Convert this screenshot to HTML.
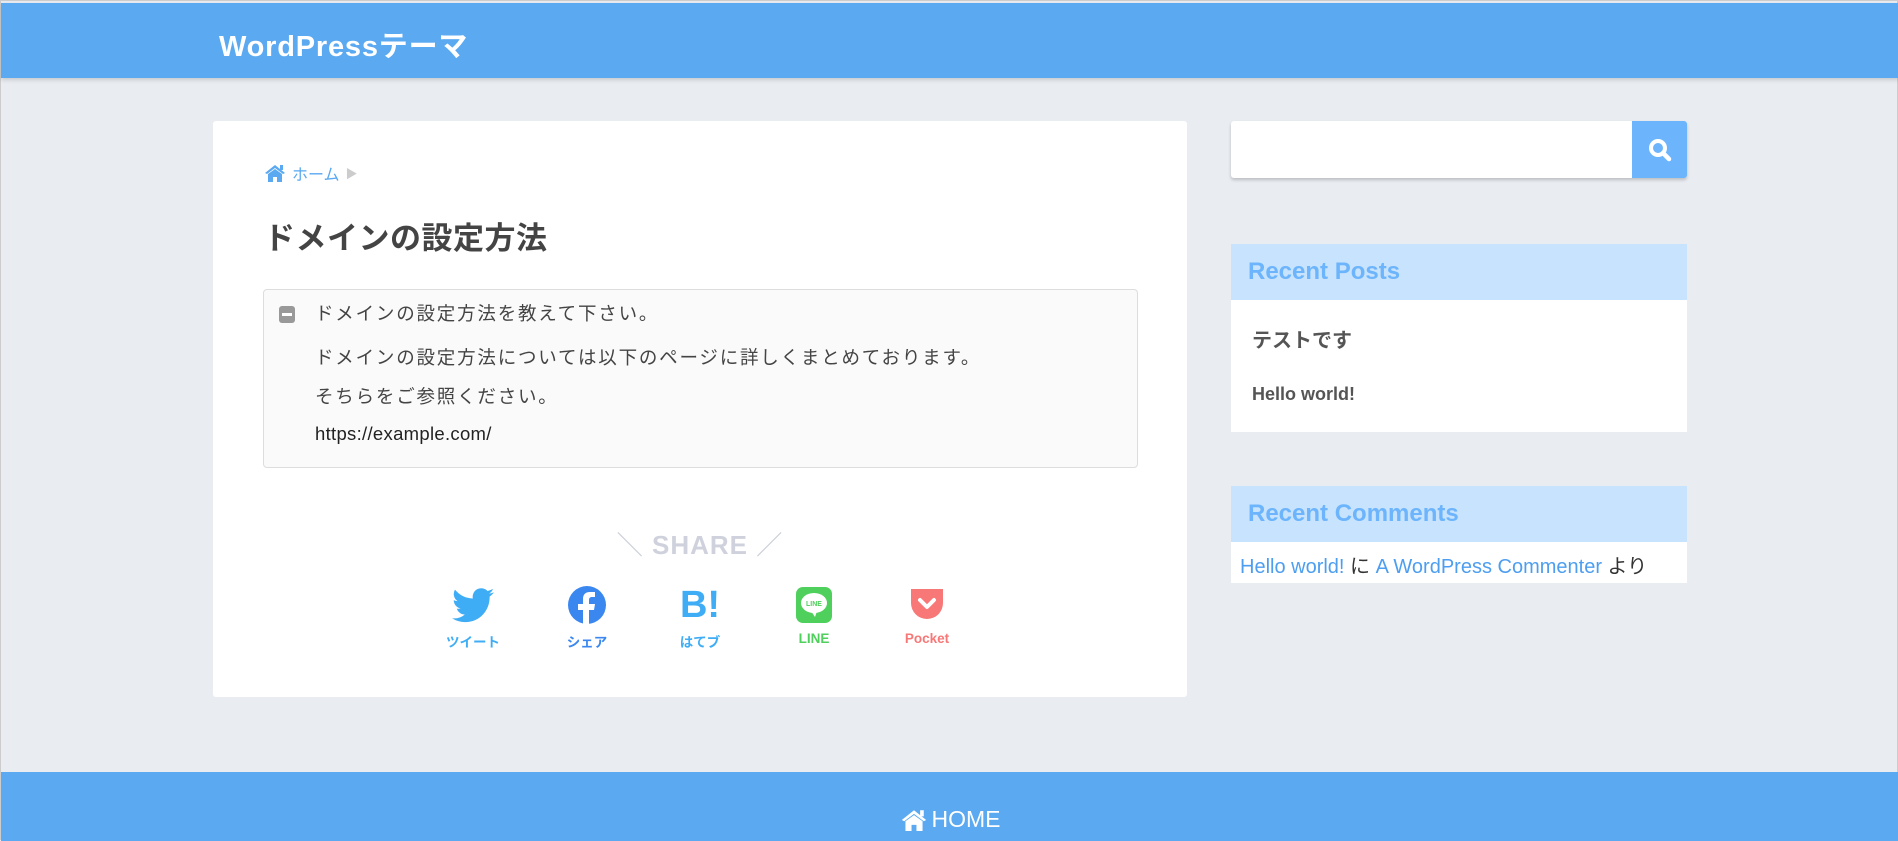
<!DOCTYPE html>
<html><head><meta charset="utf-8"><style>
*{margin:0;padding:0;box-sizing:border-box}
body{width:1898px;height:840px;background:#e9ecf1;font-family:"Liberation Sans","Noto Sans CJK JP",sans-serif;position:relative;overflow:hidden;border:1px solid #ccc}
.hdr{position:absolute;left:0;top:2px;width:1898px;height:75px;background:#5aa9f1;box-shadow:0 2px 4px rgba(0,0,0,.15)}
.hdr span{position:absolute;left:218px;top:20px;color:#fff;font-size:29px;font-weight:bold;letter-spacing:.8px}
.card{position:absolute;left:212px;top:120px;width:974px;height:576px;background:#fff;border-radius:3px}
.bc{position:absolute;left:51px;top:40px;font-size:16px;color:#5aa9f1;display:flex;align-items:center;gap:6px}
h1{position:absolute;left:51px;top:92px;font-size:31px;color:#444;font-weight:bold;letter-spacing:.5px}
.box{position:absolute;left:50px;top:168px;width:875px;height:179px;border:1px solid #ddd;border-radius:4px;background:#fafafa;color:#444;font-size:18.5px;letter-spacing:1.8px}
.box p{position:absolute;left:51px}
.share{position:absolute;left:0;width:974px;top:404px;text-align:center;font-size:26px;font-weight:bold;color:#cfd2dc;letter-spacing:1px}
.ic{position:absolute;top:464px;width:80px;text-align:center;font-size:13.5px;font-weight:bold}
.ic .g{height:40px;display:flex;align-items:center;justify-content:center;margin-bottom:6px}
.side{position:absolute;left:1230px;width:456px}
.search{top:120px;height:57px;background:#fff;border-radius:3px;box-shadow:0 2px 3px rgba(0,0,0,.2)}
.search .b{position:absolute;right:0;top:0;width:55px;height:57px;background:#6cb4fb;border-radius:0 3px 3px 0}
.wh{height:56px;background:#c8e3fd;color:#6cb4fb;font-size:24px;font-weight:bold;padding:14px 17px}
.ft{position:absolute;left:0;top:771px;width:1898px;height:69px;background:#5aa9f1;color:#fff;font-size:23px;text-align:center}
</style></head><body>
<div class="hdr"><span>WordPressテーマ</span></div>
<div class="card">
 <div class="bc"><svg width="22" height="18" viewBox="0 0 22 18"><path d="M11 1 L1 9 L3 10 L11 4 L19 10 L21 9 Z" fill="#5aa9f1"/><path d="M4 10 L11 5 L18 10 V18 H13 V13 H9 V18 H4Z" fill="#5aa9f1"/><rect x="16" y="1" width="3" height="5" fill="#5aa9f1"/></svg><span>ホーム</span><span style="color:#ccc;font-size:12px">▶</span></div>
 <h1>ドメインの設定方法</h1>
 <div class="box">
  <div style="position:absolute;left:15px;top:16px;width:16px;height:17px;background:#999;border-radius:3px"><div style="position:absolute;left:3px;top:7px;width:10px;height:3px;background:#fff"></div></div>
  <p style="top:10px">ドメインの設定方法を教えて下さい。</p>
  <p style="top:54px">ドメインの設定方法については以下のページに詳しくまとめております。</p>
  <p style="top:93px">そちらをご参照ください。</p>
  <p style="top:133px;color:#222;letter-spacing:.3px">https://example.com/</p>
 </div>
 <div class="share">＼ SHARE ／</div>
 <div class="ic" style="left:220px;color:#3fadf5"><div class="g"><svg width="42" height="35" viewBox="0 0 24 20"><path d="M24 2.4a10 10 0 0 1-2.8.8 5 5 0 0 0 2.2-2.7 10 10 0 0 1-3.1 1.2A4.9 4.9 0 0 0 11.9 6 14 14 0 0 1 1.7.9a4.9 4.9 0 0 0 1.5 6.6A5 5 0 0 1 1 6.9a4.9 4.9 0 0 0 3.9 4.8 5 5 0 0 1-2.2.1 4.9 4.9 0 0 0 4.6 3.4A9.9 9.9 0 0 1 0 17.3 14 14 0 0 0 7.5 19.5c9.1 0 14-7.5 14-14v-.6A10 10 0 0 0 24 2.4z" fill="#3fadf5"/></svg></div>ツイート</div>
 <div class="ic" style="left:334px;color:#3b87f0"><div class="g"><svg width="40" height="40" viewBox="0 0 40 40"><circle cx="20" cy="20" r="19" fill="#3b87f0"/><path d="M22 40V25h5l1-6h-6v-4c0-2 1-3 3-3h3V7h-5c-5 0-7 3-7 7v5h-5v6h5v15z" fill="#fff"/></svg></div>シェア</div>
 <div class="ic" style="left:447px;color:#3fadf5"><div class="g" style="font-size:38px;font-weight:bold">B!</div>はてブ</div>
 <div class="ic" style="left:561px;color:#4fcf5c"><div class="g"><svg width="36" height="36" viewBox="0 0 36 36"><rect width="36" height="36" rx="7" fill="#4fcf5c"/><ellipse cx="18" cy="16" rx="13" ry="10" fill="#fff"/><path d="M15 24 L19 30 L21 24Z" fill="#fff"/><text x="18" y="19" font-size="7" font-weight="bold" text-anchor="middle" fill="#4fcf5c" font-family="Liberation Sans">LINE</text></svg></div>LINE</div>
 <div class="ic" style="left:674px;color:#f87777"><div class="g"><svg width="36" height="36" viewBox="0 0 36 36"><path d="M2 2h32v14a16 16 0 0 1-32 0z" fill="#f87777"/><path d="M11 13l7 7 7-7" stroke="#fff" stroke-width="4" fill="none" stroke-linecap="round" stroke-linejoin="round"/></svg></div>Pocket</div>
</div>
<div class="side search" style="position:absolute"><div class="b"><svg width="55" height="57" viewBox="0 0 55 57"><circle cx="26" cy="27" r="7" stroke="#fff" stroke-width="4" fill="none"/><path d="M31 32l6 6" stroke="#fff" stroke-width="4.5" stroke-linecap="round"/></svg></div></div>
<div class="side" style="top:243px"><div class="wh">Recent Posts</div>
 <div style="background:#fff;height:132px;position:relative;color:#555;font-weight:bold">
  <div style="position:absolute;left:21px;top:24px;font-size:20px">テストです</div>
  <div style="position:absolute;left:21px;top:84px;font-size:18px">Hello world!</div>
 </div></div>
<div class="side" style="top:485px"><div class="wh">Recent Comments</div>
 <div style="background:#fff;height:41px;padding:8px 9px;font-size:20px;color:#333"><span style="color:#4d9ef0">Hello world!</span> に <span style="color:#4d9ef0">A WordPress Commenter</span> より</div></div>
<div class="ft"><div style="position:absolute;left:0;width:1898px;top:34px;display:flex;justify-content:center;align-items:center;gap:4px"><svg width="28" height="22" viewBox="0 0 22 18"><path d="M11 1 L1 9 L3 10 L11 4 L19 10 L21 9 Z" fill="#fff"/><path d="M4 10 L11 5 L18 10 V18 H13 V13 H9 V18 H4Z" fill="#fff"/><rect x="16" y="1" width="3" height="5" fill="#fff"/></svg><span>HOME</span></div></div>
</body></html>
